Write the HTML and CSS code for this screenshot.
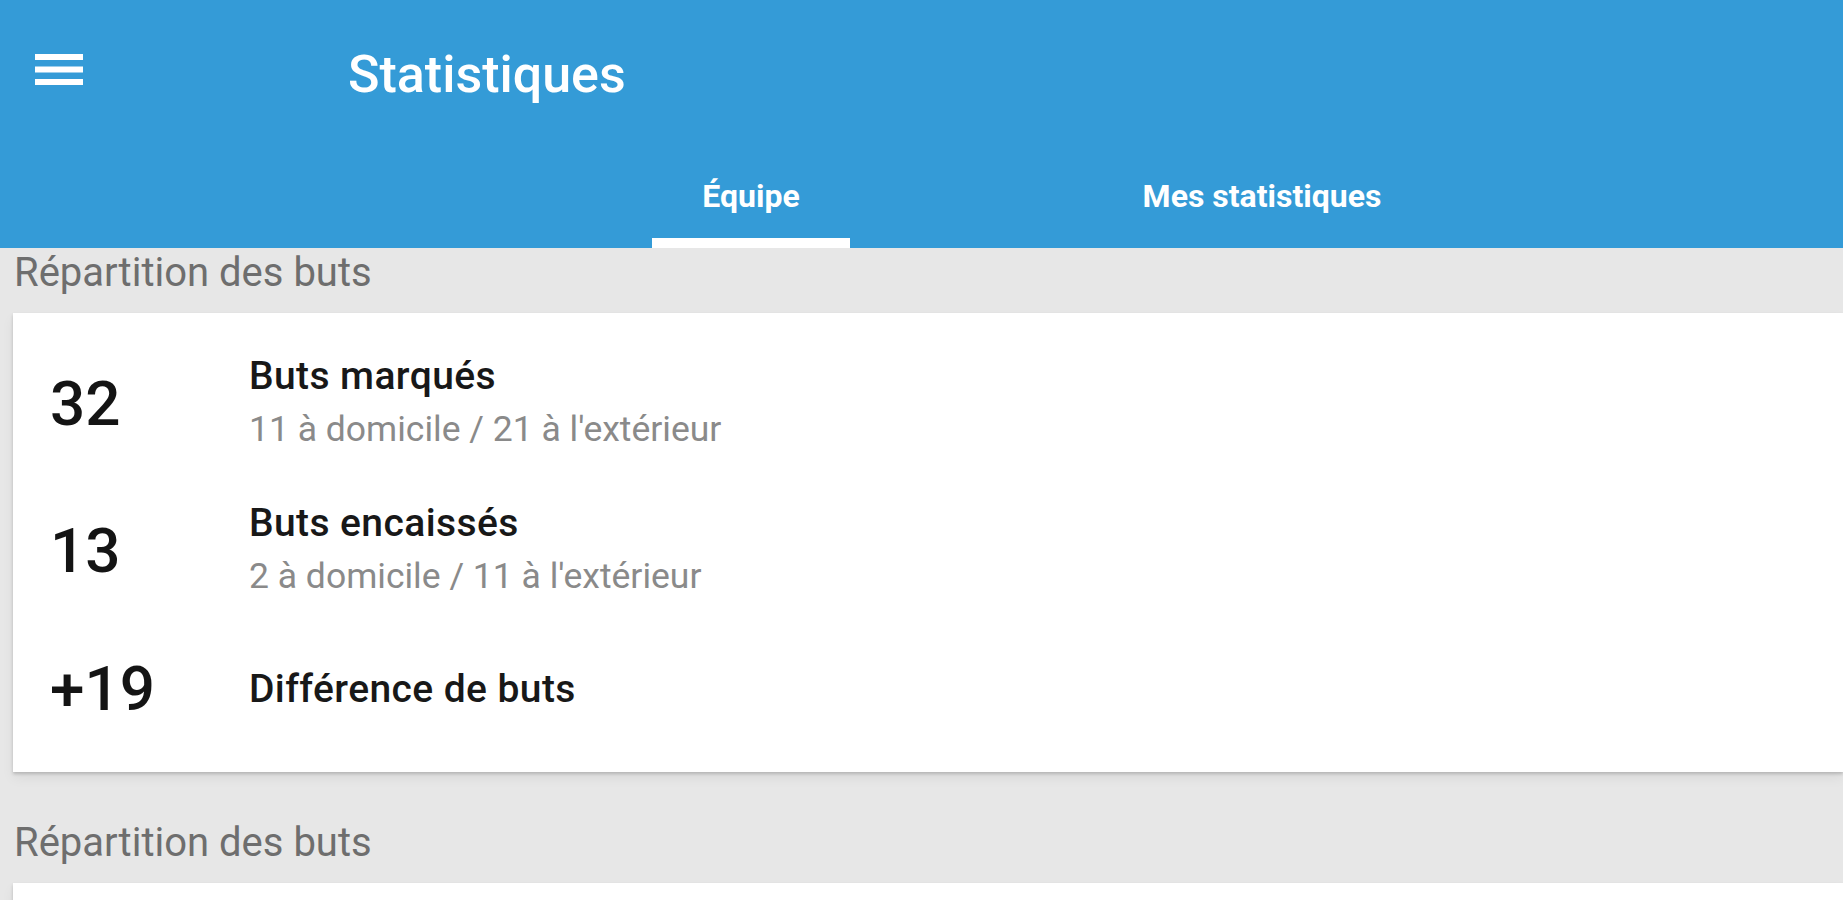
FILE: index.html
```html
<!DOCTYPE html>
<html lang="fr">
<head>
<meta charset="utf-8">
<title>Statistiques</title>
<link rel="stylesheet" href="styles.css">
</head>
<body>
<header class="appbar">
  <div class="toolbar">
    <button class="menu-btn" aria-label="Menu">
      <svg width="48" height="32" viewBox="0 0 48 32"><rect x="0" y="0" width="48" height="6" fill="#fff"/><rect x="0" y="12.5" width="48" height="6" fill="#fff"/><rect x="0" y="25" width="48" height="6" fill="#fff"/></svg>
    </button>
    <h1 class="title">Statistiques</h1>
  </div>
  <nav class="tabs">
    <div class="tab active">Équipe</div>
    <div class="tab">Mes statistiques</div>
  </nav>
</header>
<main class="content">
  <section class="section">
    <h2 class="section-label">Répartition des buts</h2>
    <div class="card">
      <div class="row">
        <div class="num">32</div>
        <div class="text">
          <div class="row-title">Buts marqués</div>
          <div class="row-sub">11 à domicile / 21 à l'extérieur</div>
        </div>
      </div>
      <div class="row">
        <div class="num">13</div>
        <div class="text">
          <div class="row-title">Buts encaissés</div>
          <div class="row-sub">2 à domicile / 11 à l'extérieur</div>
        </div>
      </div>
      <div class="row">
        <div class="num">+19</div>
        <div class="text">
          <div class="row-title">Différence de buts</div>
        </div>
      </div>
    </div>
  </section>
  <section class="section">
    <h2 class="section-label">Répartition des buts</h2>
    <div class="card card-empty"></div>
  </section>
</main>
</body>
</html>
```
FILE: styles.css
```css
html, body {
  margin: 0;
  padding: 0;
  height: 100%;
  overflow: hidden;
}
body {
  background: #e7e7e7;
  font-family: Roboto, "Liberation Sans", sans-serif;
}
.appbar {
  background: #349bd7;
  color: #fff;
  height: 248px;
  display: flex;
  flex-direction: column;
}
.toolbar {
  height: 140px;
  display: flex;
  align-items: center;
}
.menu-btn {
  background: none;
  border: 0;
  padding: 0;
  margin-left: 35px;
  width: 48px;
  height: 32px;
  display: flex;
}
.title {
  margin: 10px 0 0 265px;
  font-size: 52px;
  line-height: 1;
  font-weight: 500;
}
.tabs {
  flex: 1;
  display: flex;
  padding-left: 652px;
  gap: 313px;
}
.tab {
  width: 198px;
  display: flex;
  align-items: center;
  justify-content: center;
  font-size: 32px;
  font-weight: 700;
  white-space: nowrap;
  border-bottom: 10px solid transparent;
  box-sizing: border-box;
  padding-top: 14px;
}
.tab.active {
  border-bottom-color: #fff;
}
.content {
  padding-left: 13px;
}
.section {
  margin-bottom: 46px;
}
.section-label {
  margin: 0;
  padding: 5px 0 20px 1px;
  font-size: 40px;
  line-height: 40px;
  font-weight: 400;
  color: #6e6e6e;
}
.card {
  background: #fff;
  padding: 17px 0 19px;
  box-shadow: 0 2px 3px rgba(0,0,0,0.18), 0 6px 12px rgba(0,0,0,0.06);
}
.card-empty {
  height: 200px;
}
.row {
  display: flex;
  align-items: center;
  padding: 20px 0;
}
.num {
  width: 236px;
  padding-left: 37px;
  box-sizing: border-box;
  font-size: 62px;
  line-height: 89px;
  font-weight: 500;
  color: #141414;
}
.text {
  display: flex;
  flex-direction: column;
}
.row-title {
  font-size: 39px;
  line-height: 52px;
  font-weight: 500;
  letter-spacing: 0.4px;
  color: #181818;
}
.row-sub {
  font-size: 35.5px;
  line-height: 55px;
  color: #8a8a8a;
}
```
